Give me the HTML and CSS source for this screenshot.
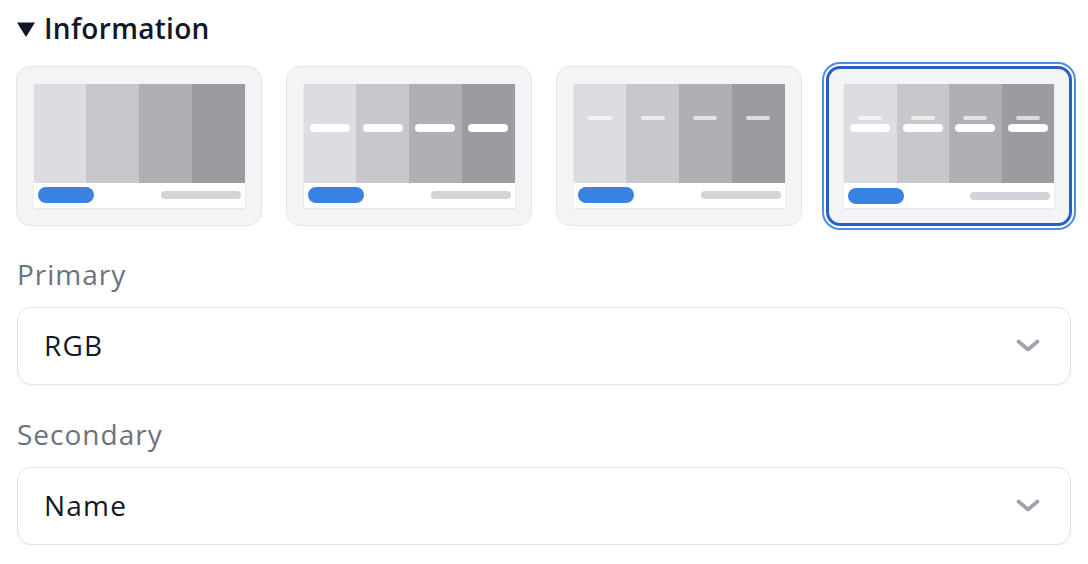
FILE: index.html
```html
<!DOCTYPE html>
<html lang="en">
<head>
<meta charset="utf-8">
<title>Information</title>
<link rel="stylesheet" href="styles.css">
</head>
<body>
<div class="panel">
  <div class="heading">
    <svg class="caret" width="18" height="15" viewBox="0 0 18 15"><path d="M0 0.5 H18 L9 15 Z" fill="#111827"/></svg>
    <span>Information</span>
  </div>

  <div class="cards">
    <div class="card">
      <div class="preview">
        <div class="stripes">
          <div class="stripe s1"></div>
          <div class="stripe s2"></div>
          <div class="stripe s3"></div>
          <div class="stripe s4"></div>
        </div>
        <div class="footer"><span class="pill"></span><span class="line"></span></div>
      </div>
    </div>

    <div class="card">
      <div class="preview">
        <div class="stripes">
          <div class="stripe s1"><span class="big"></span></div>
          <div class="stripe s2"><span class="big"></span></div>
          <div class="stripe s3"><span class="big"></span></div>
          <div class="stripe s4"><span class="big"></span></div>
        </div>
        <div class="footer"><span class="pill"></span><span class="line"></span></div>
      </div>
    </div>

    <div class="card">
      <div class="preview">
        <div class="stripes">
          <div class="stripe s1"><span class="small"></span></div>
          <div class="stripe s2"><span class="small"></span></div>
          <div class="stripe s3"><span class="small"></span></div>
          <div class="stripe s4"><span class="small"></span></div>
        </div>
        <div class="footer"><span class="pill"></span><span class="line"></span></div>
      </div>
    </div>

    <div class="card selected">
      <div class="preview">
        <div class="stripes">
          <div class="stripe s1"><span class="small"></span><span class="big"></span></div>
          <div class="stripe s2"><span class="small"></span><span class="big"></span></div>
          <div class="stripe s3"><span class="small"></span><span class="big"></span></div>
          <div class="stripe s4"><span class="small"></span><span class="big"></span></div>
        </div>
        <div class="footer"><span class="pill"></span><span class="line"></span></div>
      </div>
    </div>
  </div>

  <div class="field first">
    <div class="label">Primary</div>
    <div class="select">
      <span class="value">RGB</span>
      <svg class="chevron" width="24" height="14" viewBox="0 0 24 14"><path d="M2.5 2.5 L12 10.5 L21.5 2.5" fill="none" stroke="#9ca3af" stroke-width="3.6" stroke-linecap="round" stroke-linejoin="round"/></svg>
    </div>
  </div>

  <div class="field">
    <div class="label">Secondary</div>
    <div class="select">
      <span class="value">Name</span>
      <svg class="chevron" width="24" height="14" viewBox="0 0 24 14"><path d="M2.5 2.5 L12 10.5 L21.5 2.5" fill="none" stroke="#9ca3af" stroke-width="3.6" stroke-linecap="round" stroke-linejoin="round"/></svg>
    </div>
  </div>
</div>
</body>
</html>
```

FILE: styles.css
```css
* { box-sizing: border-box; }

html, body {
  margin: 0;
  padding: 0;
  background: #ffffff;
}

body {
  font-family: "Open Sans", "Noto Sans", sans-serif;
  color: #111827;
}

.panel {
  width: 1088px;
  padding: 8px 16px 0 16px;
  display: flex;
  flex-direction: column;
}

.heading {
  height: 40px;
  display: flex;
  align-items: center;
  gap: 9px;
  padding-left: 1px;
  font-size: 28px;
  font-weight: 600;
  letter-spacing: 0.3px;
  color: #111827;
}

.caret { flex: none; margin-top: 2px; }

.cards {
  margin-top: 18px;
  display: grid;
  grid-template-columns: repeat(4, 1fr);
  gap: 24px;
}

.card {
  height: 160px;
  background: #f3f4f6;
  border: 1.5px solid #e4e6ea;
  border-radius: 14px;
  padding: 16.5px;
}

.card.selected {
  border: 3px solid #2a5fc9;
  padding: 15px;
  outline: 2px solid #4a8ee6;
  outline-offset: 2px;
  border-radius: 14px;
}

.preview {
  height: 124px;
  display: flex;
  flex-direction: column;
  background: #ffffff;
  box-shadow: 0 1px 2px rgba(0, 0, 0, 0.08);
}

.stripes {
  height: 99px;
  display: flex;
}

.stripe {
  flex: 1;
  display: flex;
  flex-direction: column;
  align-items: center;
  padding-top: 32px;
}

.s1 { background: #dcdde0; }
.s2 { background: #c7c8cb; }
.s3 { background: #afb0b4; }
.s4 { background: #9a9ca2; }

.small {
  width: 24px;
  height: 4px;
  border-radius: 2px;
  background: rgba(255, 255, 255, 0.65);
}

.big {
  width: 40px;
  height: 8px;
  border-radius: 4px;
  background: #ffffff;
  margin-top: 8px;
}

.small + .big { margin-top: 4px; }

.footer {
  flex: 1;
  display: flex;
  align-items: center;
  justify-content: space-between;
  padding: 0 4px;
}

.pill {
  width: 56px;
  height: 16px;
  border-radius: 8px;
  background: #3a82e2;
}

.line {
  width: 80px;
  height: 8px;
  border-radius: 4px;
  background: #d2d4d9;
}

.field {
  display: flex;
  flex-direction: column;
}

.field.first { margin-top: 28px; }
.field + .field { margin-top: 29px; }

.label {
  height: 40px;
  line-height: 40px;
  font-size: 28px;
  color: #6b7280;
  padding-left: 1px;
  letter-spacing: 1px;
}

.select {
  margin-top: 13px;
  height: 78px;
  margin-left: 1px;
  margin-right: 1px;
  border: 1.5px solid #e2e4e8;
  border-radius: 14px;
  box-shadow: 0 1px 2px rgba(0, 0, 0, 0.04);
  background: #ffffff;
  display: flex;
  align-items: center;
  justify-content: space-between;
  padding: 0 30px 0 26px;
}

.value {
  font-size: 28px;
  color: #111827;
  letter-spacing: 1.2px;
  margin-top: -3px;
}

.chevron { flex: none; margin-top: 0; }
```
